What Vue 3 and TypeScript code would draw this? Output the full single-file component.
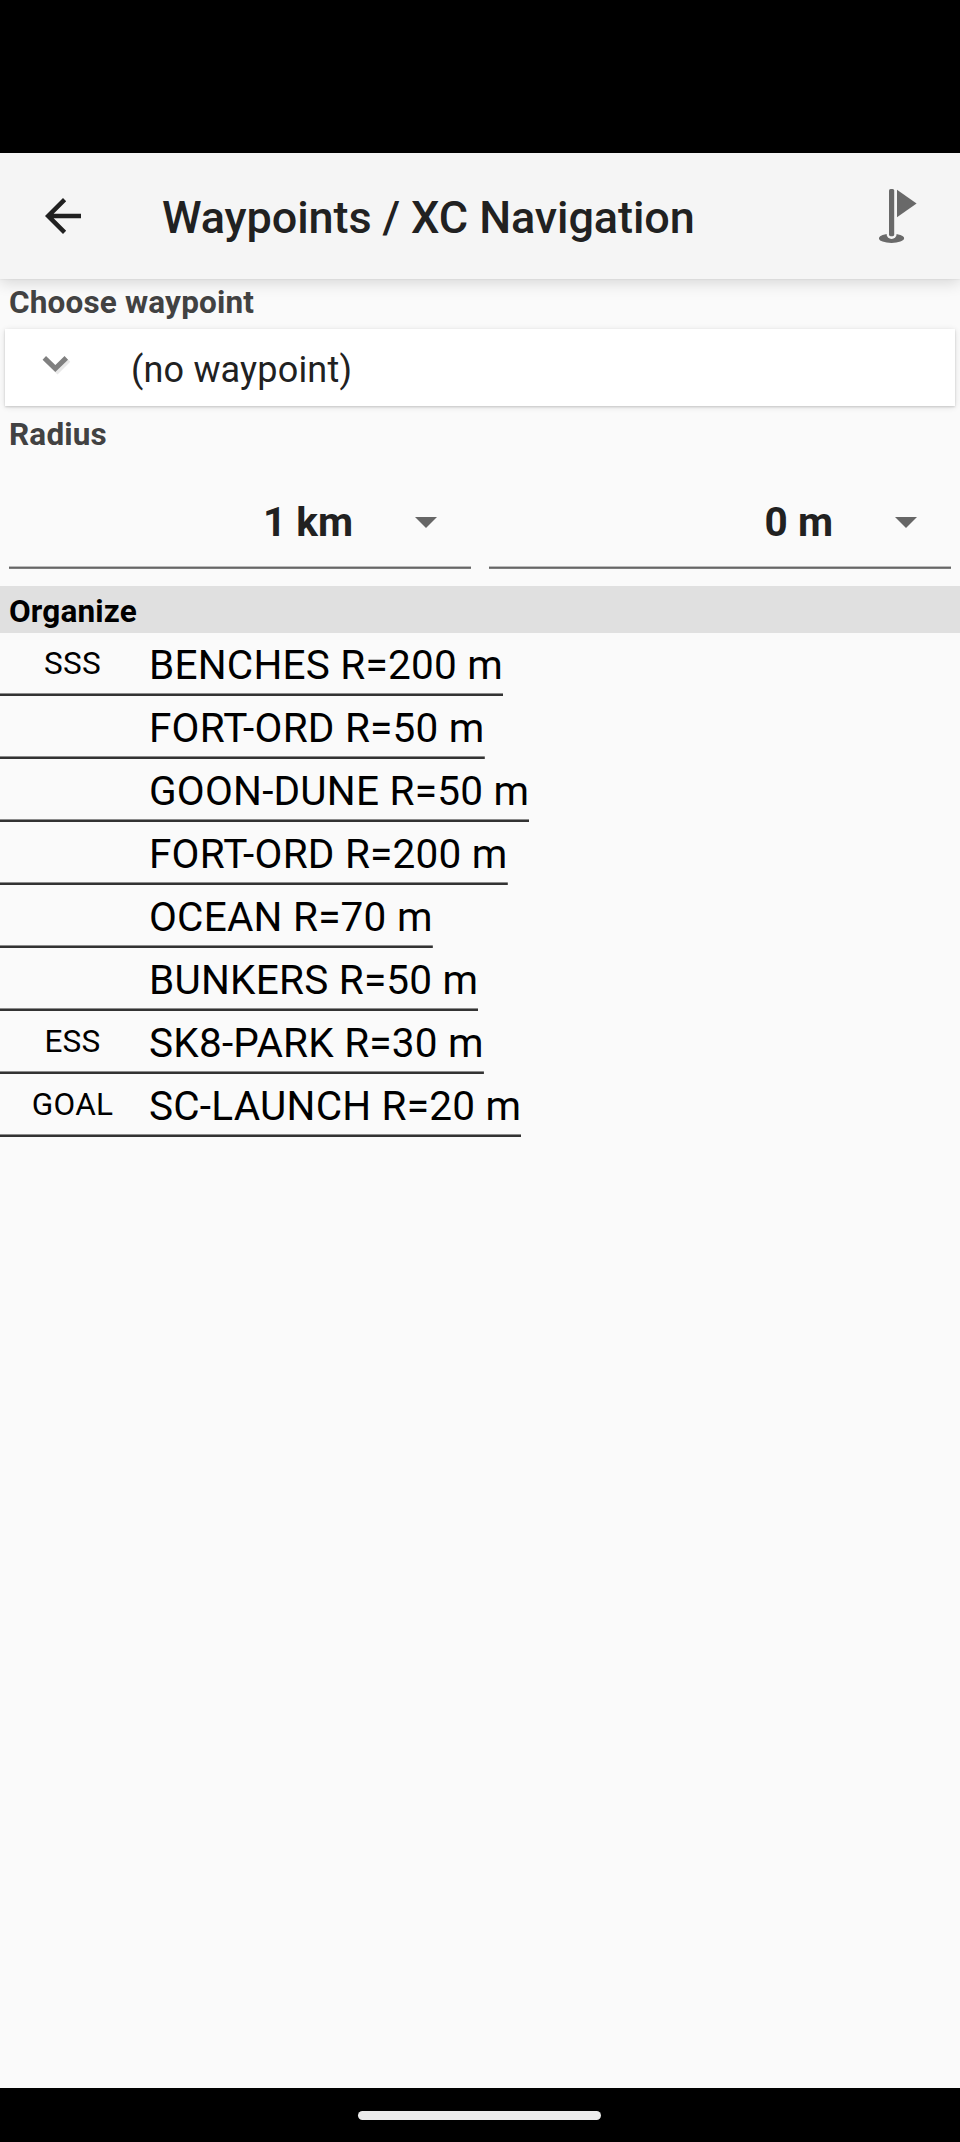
<script setup lang="ts">
interface TaskPoint {
  tag: string
  name: string
}

const radii: string[] = ['1 km', '0 m']

const points: TaskPoint[] = [
  { tag: 'SSS', name: 'BENCHES R=200 m' },
  { tag: '', name: 'FORT-ORD R=50 m' },
  { tag: '', name: 'GOON-DUNE R=50 m' },
  { tag: '', name: 'FORT-ORD R=200 m' },
  { tag: '', name: 'OCEAN R=70 m' },
  { tag: '', name: 'BUNKERS R=50 m' },
  { tag: 'ESS', name: 'SK8-PARK R=30 m' },
  { tag: 'GOAL', name: 'SC-LAUNCH R=20 m' },
]
</script>

<template>
  <div class="screen">
    <div class="status-bar"></div>
    <header class="toolbar">
      <svg class="back" viewBox="0 0 24 24" aria-label="Back">
        <path d="M20 11H7.83l5.59-5.59L12 4l-8 8 8 8 1.41-1.41L7.83 13H20v-2z" />
      </svg>
      <h1 class="title">Waypoints / XC Navigation</h1>
      <svg class="flag" viewBox="0 0 38 54" aria-label="Waypoint">
        <ellipse cx="12.5" cy="49.3" rx="12.6" ry="4.6" />
        <path class="halo" d="M12.6 2V45" />
        <rect x="10" y="0" width="5.2" height="47.2" rx="1.6" />
        <path d="M18 .8L37.6 14.5L18 28.2z" />
      </svg>
    </header>
    <main class="content">
      <div class="label">Choose waypoint</div>
      <div class="card">
        <svg class="chevron" viewBox="0 0 32 24">
          <path class="chevron-shadow" d="M4.5 5L15.5 16L26.5 5" />
          <path class="chevron-line" d="M2.3 2.9L13.3 13.5L24.3 2.9" />
        </svg>
        <span class="choice">(no waypoint)</span>
      </div>
      <div class="label radius-label">Radius</div>
      <div class="radii">
        <div v-for="radius in radii" :key="radius" class="spinner">
          <span class="radius">{{ radius }}</span>
          <svg class="caret" viewBox="0 0 22 11"><path d="M0 0H22L11 11z" /></svg>
        </div>
      </div>
      <div class="organize">Organize</div>
      <div class="points">
        <div v-for="(point, i) in points" :key="i" class="point">
          <span class="tag">{{ point.tag }}</span>
          <span class="name">{{ point.name }}</span>
        </div>
      </div>
    </main>
    <footer class="nav-bar"><div class="handle"></div></footer>
  </div>
</template>

<style>
body {
  margin: 0;
}
</style>

<style scoped>
.screen {
  width: 960px;
  height: 2142px;
  display: flex;
  flex-direction: column;
  background: #fafafa;
  color: #212121;
  font-family: Roboto, sans-serif;
  white-space: nowrap;
  overflow: hidden;
}
.status-bar {
  height: 153px;
  flex: none;
  background: #000;
}
.toolbar {
  height: 126px;
  flex: none;
  box-sizing: border-box;
  display: flex;
  align-items: center;
  padding: 0 43px 0 36px;
  background: #f5f5f5;
  box-shadow: 0 4px 14px rgba(0, 0, 0, 0.14), 0 0 2px rgba(0, 0, 0, 0.1);
}
.back {
  width: 54px;
  height: 54px;
  margin-top: -1px;
  fill: #212121;
}
.title {
  flex: 1;
  margin: 3px 0 0 72px;
  font-size: 45px;
  line-height: 54px;
  font-weight: 500;
  letter-spacing: -0.1px;
}
.flag {
  width: 38px;
  height: 54px;
  fill: #696969;
}
.halo {
  fill: none;
  stroke: #f5f5f5;
  stroke-width: 10;
  stroke-linecap: round;
}
.content {
  flex: 1;
}
.label {
  height: 36px;
  padding: 5px 0 0 9px;
  margin-bottom: 9px;
  font-size: 31.5px;
  line-height: 37px;
  font-weight: 700;
  letter-spacing: 0.17px;
  color: #424242;
}
.card {
  height: 77px;
  margin: 0 5px;
  display: flex;
  align-items: center;
  background: #fff;
  box-shadow: 0 1px 2px rgba(0, 0, 0, 0.15), 0 1px 6px rgba(0, 0, 0, 0.12);
}
.chevron {
  width: 32px;
  height: 24px;
  margin: -1px 0 0 36.5px;
  fill: none;
  stroke-width: 5;
}
.chevron-line {
  stroke: #808080;
}
.chevron-shadow {
  stroke: #e8e8e8;
}
.choice {
  margin: 4px 0 0 57.5px;
  font-size: 36px;
  line-height: 44px;
  letter-spacing: 0.18px;
}
.radius-label {
  margin-top: 5px;
  margin-bottom: 0;
}
.radii {
  display: grid;
  grid-template-columns: 1fr 1fr;
  gap: 18px;
  padding: 0 9px;
}
.spinner {
  height: 117px;
  box-sizing: border-box;
  display: flex;
  align-items: center;
  justify-content: flex-end;
  gap: 62px;
  padding: 25px 34px 0 0;
  margin-bottom: 17px;
  font-size: 40.5px;
  line-height: 48px;
  font-weight: 700;
  background: linear-gradient(#bbb 1px, #666 1px, #666 2px, #7d7d7d 2px) bottom / 100% 3px no-repeat;
}
.radius {
  margin-top: -2px;
}
.caret {
  width: 22px;
  height: 11px;
  margin-top: -1px;
  fill: #666;
}
.organize {
  height: 47px;
  padding-left: 9px;
  font-size: 31.5px;
  line-height: 51px;
  font-weight: 700;
  letter-spacing: 0.15px;
  color: #000;
  background: #e0e0e0;
}
.points {
  display: flex;
  flex-direction: column;
  align-items: flex-start;
  color: #000;
}
.point {
  height: 63px;
  display: flex;
  background: linear-gradient(#8c8c8c 1px, #333 1px) bottom / 100% 3px no-repeat;
}
.tag {
  width: 145px;
  text-align: center;
  font-size: 31.5px;
  line-height: 62px;
  letter-spacing: 0.3px;
}
.name {
  padding-left: 4px;
  font-size: 40.5px;
  line-height: 64px;
  letter-spacing: 0.23px;
}
.nav-bar {
  height: 54px;
  flex: none;
  box-sizing: border-box;
  display: flex;
  align-items: center;
  justify-content: center;
  padding-right: 1px;
  background: #000;
}
.handle {
  width: 243px;
  height: 9px;
  border-radius: 5px;
  background: #ececec;
}
</style>
